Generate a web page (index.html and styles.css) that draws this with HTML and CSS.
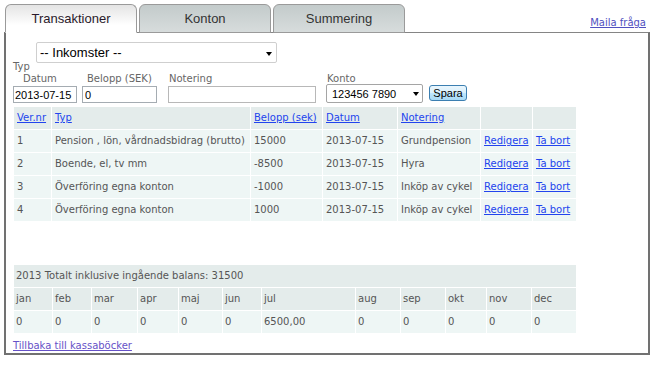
FILE: index.html
```html
<!DOCTYPE html>
<html lang="sv">

<head>
    <meta charset="UTF-8" />
    <title>Kassabok – Transaktioner</title>
    <link rel="stylesheet" href="styles.css">
</head>

<body>
    <div class="tabbar">
        <ul class="tabs">
            <li class="tab active">Transaktioner</li>
            <li class="tab">Konton</li>
            <li class="tab">Summering</li>
        </ul>
        <a class="mail" href="#">Maila fråga</a>
    </div>

    <div class="panel">
        <form class="entry">
            <div class="type-row">
                <label class="lbl type-lbl" for="typ">Typ</label>
                <span class="sel sel-typ">
                    <select id="typ">
                        <option>-- Inkomster --</option>
                    </select>
                </span>
            </div>

            <div class="fields">
                <div class="field">
                    <label class="lbl lbl-datum" for="datum">Datum</label>
                    <input class="inp inp-datum" id="datum" type="text" value="2013-07-15">
                </div>
                <div class="field">
                    <label class="lbl lbl-belopp" for="belopp">Belopp (SEK)</label>
                    <input class="inp inp-belopp" id="belopp" type="text" value="0">
                </div>
                <div class="field">
                    <label class="lbl" for="notering">Notering</label>
                    <input class="inp inp-notering" id="notering" type="text" value="">
                </div>
                <div class="field">
                    <label class="lbl lbl-konto" for="konto">Konto</label>
                    <span class="sel sel-konto">
                        <select id="konto">
                            <option>123456 7890</option>
                        </select>
                    </span>
                </div>
                <div class="field">
                    <button class="btn" type="button">Spara</button>
                </div>
            </div>
        </form>

        <table class="grid trans">
            <colgroup>
                <col class="c-ver"><col class="c-typ"><col class="c-belopp"><col class="c-datum">
                <col class="c-not"><col class="c-red"><col class="c-bort">
            </colgroup>
            <thead>
                <tr>
                    <th><a href="#">Ver.nr</a></th>
                    <th><a href="#">Typ</a></th>
                    <th><a href="#">Belopp (sek)</a></th>
                    <th><a href="#">Datum</a></th>
                    <th><a href="#">Notering</a></th>
                    <th></th>
                    <th></th>
                </tr>
            </thead>
            <tbody>
                <tr>
                    <td>1</td>
                    <td>Pension , lön, vårdnadsbidrag (brutto)</td>
                    <td>15000</td>
                    <td>2013-07-15</td>
                    <td>Grundpension</td>
                    <td><a href="#">Redigera</a></td>
                    <td><a href="#">Ta bort</a></td>
                </tr>
                <tr>
                    <td>2</td>
                    <td>Boende, el, tv mm</td>
                    <td>-8500</td>
                    <td>2013-07-15</td>
                    <td>Hyra</td>
                    <td><a href="#">Redigera</a></td>
                    <td><a href="#">Ta bort</a></td>
                </tr>
                <tr>
                    <td>3</td>
                    <td>Överföring egna konton</td>
                    <td>-1000</td>
                    <td>2013-07-15</td>
                    <td>Inköp av cykel</td>
                    <td><a href="#">Redigera</a></td>
                    <td><a href="#">Ta bort</a></td>
                </tr>
                <tr>
                    <td>4</td>
                    <td>Överföring egna konton</td>
                    <td>1000</td>
                    <td>2013-07-15</td>
                    <td>Inköp av cykel</td>
                    <td><a href="#">Redigera</a></td>
                    <td><a href="#">Ta bort</a></td>
                </tr>
            </tbody>
        </table>

        <table class="grid months">
            <colgroup>
                <col class="m-jan"><col class="m-feb"><col class="m-mar"><col class="m-apr">
                <col class="m-maj"><col class="m-jun"><col class="m-jul"><col class="m-aug">
                <col class="m-sep"><col class="m-okt"><col class="m-nov"><col class="m-dec">
            </colgroup>
            <thead>
                <tr>
                    <th colspan="12">2013 Totalt inklusive ingående balans: 31500</th>
                </tr>
                <tr>
                    <th>jan</th><th>feb</th><th>mar</th><th>apr</th><th>maj</th><th>jun</th>
                    <th>jul</th><th>aug</th><th>sep</th><th>okt</th><th>nov</th><th>dec</th>
                </tr>
            </thead>
            <tbody>
                <tr>
                    <td>0</td><td>0</td><td>0</td><td>0</td><td>0</td><td>0</td>
                    <td>6500,00</td><td>0</td><td>0</td><td>0</td><td>0</td><td>0</td>
                </tr>
            </tbody>
        </table>

        <p class="back"><a href="#">Tillbaka till kassaböcker</a></p>
    </div>
</body>

</html>
```

FILE: styles.css
```css
body {
    margin: 0;
    font-family: "DejaVu Sans", Verdana, sans-serif;
    font-size: 10px;
    color: #555;
    background: #fff;
}

a {
    color: #2244ee;
}

/* ─── Flikar ───────────────────────────────── */
.tabbar {
    display: flex;
    padding: 4px 0 0 5px;
    margin-bottom: -1px;
}

.tabs {
    display: flex;
    gap: 2px;
    list-style: none;
    margin: 0;
    padding: 0;
}

.tab {
    width: 130px;
    height: 27px;
    display: flex;
    align-items: center;
    justify-content: center;
    border: 1px solid #9a9a9a;
    border-radius: 6px 6px 0 0;
    background: linear-gradient(#c3cbcb, #d7dcdc);
    font-family: "Liberation Sans", Arial, sans-serif;
    font-size: 13px;
    line-height: 15px;
    color: #333;
}

.tab.active {
    position: relative;
    z-index: 1;
    border-bottom-color: #fff;
    background: linear-gradient(#e4e4e4, #fff 75%);
    color: #2a1a2a;
}

.mail {
    align-self: flex-start;
    margin: 13px 16px 0 auto;
    line-height: 12px;
    color: #5050c0;
}

/* ─── Panel ───────────────────────────────── */
.panel {
    margin: 0 12px 0 4px;
    border: 2px solid #717171;
    border-top: 1px solid #858585;
    padding: 9px 7px 1px 7px;
}

.entry {
    margin: 0;
}

.lbl {
    display: block;
    line-height: 12px;
    margin-bottom: 1px;
    padding-left: 1px;
    color: #666;
}

.type-row {
    display: flex;
    align-items: flex-end;
}

.type-lbl {
    width: 23px;
    padding-left: 0;
    margin-bottom: -10px;
}

.lbl-datum {
    padding-left: 10px;
}

.lbl-belopp {
    padding-left: 5px;
}

.lbl-konto {
    margin-bottom: -1px;
}

.fields {
    display: grid;
    grid-template-columns: 69px 86px 158px 103px auto;
    align-items: end;
    margin-top: 10px;
}

.inp {
    display: block;
    box-sizing: border-box;
    height: 17px;
    margin: 0;
    padding: 0 2px;
    border: 1px solid #a5acb2;
    font-family: "Liberation Sans", Arial, sans-serif;
    font-size: 11px;
    color: #000;
}

.inp-datum {
    width: 64px;
    padding-left: 1px;
}

.inp-belopp {
    width: 75px;
}

.inp-notering {
    width: 148px;
    border-color: #b8b8b8;
}

/* select med egen pil */
.sel {
    position: relative;
    display: block;
    width: fit-content;
}

.sel select {
    display: block;
    box-sizing: border-box;
    margin: 0;
    appearance: none;
    -webkit-appearance: none;
    background: #fff;
    font-family: "Liberation Sans", Arial, sans-serif;
    color: #000;
    border-radius: 2px;
}

.sel::after {
    content: "";
    position: absolute;
    border-left: 3.5px solid transparent;
    border-right: 3.5px solid transparent;
    border-top: 4px solid #000;
    pointer-events: none;
}

.sel-typ select {
    width: 241px;
    height: 21px;
    padding: 0 0 0 3px;
    border: 1px solid #cfcfcf;
    font-size: 13px;
}

.sel-typ::after {
    right: 5px;
    top: 10px;
}

.sel-konto select {
    width: 97px;
    height: 19px;
    padding: 0 0 0 5px;
    border: 1px solid #a5a5a5;
    font-size: 11px;
}

.sel-konto::after {
    right: 4px;
    top: 8px;
}

.btn {
    width: 38px;
    height: 16px;
    margin: 0 0 2px 0;
    padding: 0;
    border: 1px solid #3c7fb1;
    border-radius: 3px;
    background: linear-gradient(#eaf6fd, #d9f0fc 50%, #bee6fd 51%, #a7d9f5);
    font-family: "Liberation Sans", Arial, sans-serif;
    font-size: 11px;
    line-height: 14px;
    color: #000;
}

/* ─── Tabeller ───────────────────────────────── */
.grid {
    border-collapse: separate;
    border-spacing: 1px;
    table-layout: fixed;
    width: 564px;
}

.grid th,
.grid td {
    padding: 5px 3px;
    line-height: 12px;
    text-align: left;
    font-weight: normal;
    white-space: nowrap;
    overflow: hidden;
    background: #eef6f5;
}

.grid th {
    background: #e4eceb;
}

.trans {
    margin-top: 3px;
}

.c-ver { width: 37px; }
.c-typ { width: 198px; }
.c-belopp { width: 71px; }
.c-datum { width: 74px; }
.c-not { width: 82px; }
.c-red { width: 51px; }
.c-bort { width: 43px; }

.months {
    margin-top: 42px;
}

.months th,
.months td {
    padding-left: 2px;
    padding-right: 2px;
}

.m-jan, .m-feb, .m-jun { width: 38px; }
.m-mar { width: 45px; }
.m-apr, .m-okt { width: 40px; }
.m-maj { width: 43px; }
.m-jul { width: 93px; }
.m-aug, .m-sep, .m-nov, .m-dec { width: 44px; }

.back {
    margin: 6px 0 0 0;
    line-height: 12px;
}

.back a {
    color: #6652c8;
}
```
